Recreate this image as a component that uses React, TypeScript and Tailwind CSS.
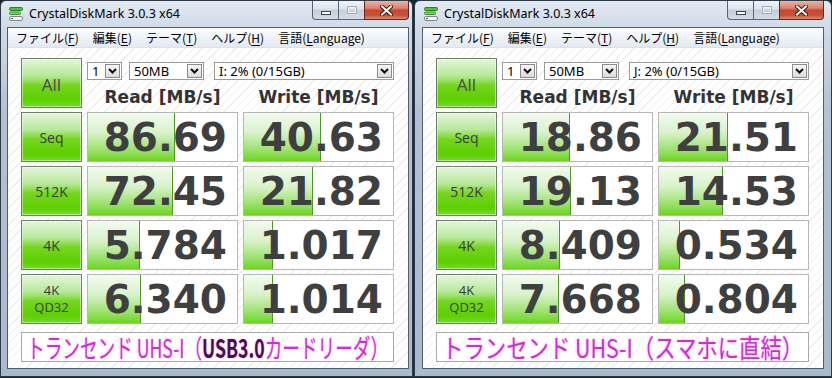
import React, { useLayoutEffect, useRef, useState } from 'react';

type Row = { label: string[]; read: string; write: string };

const leftRows: Row[] = [
  { label: ['Seq'], read: '86.69', write: '40.63' },
  { label: ['512K'], read: '72.45', write: '21.82' },
  { label: ['4K'], read: '5.784', write: '1.017' },
  { label: ['4K', 'QD32'], read: '6.340', write: '1.014' },
];

const rightRows: Row[] = [
  { label: ['Seq'], read: '18.86', write: '21.51' },
  { label: ['512K'], read: '19.13', write: '14.53' },
  { label: ['4K'], read: '8.409', write: '0.534' },
  { label: ['4K', 'QD32'], read: '7.668', write: '0.804' },
];

// CrystalDiskMark meter is log scaled
const meter = (v: string) => {
  const w = 149 * (0.193 + 0.203 * Math.log10(parseFloat(v)));
  return Math.max(0, Math.min(149, Math.round(w)));
};

const menu = [
  ['ファイル(', 'F', ')'],
  ['編集(', 'E', ')'],
  ['テーマ(', 'T', ')'],
  ['ヘルプ(', 'H', ')'],
  ['言語(', 'L', 'anguage)'],
];

function AppIcon() {
  return (
    <svg width="16" height="16" viewBox="0 0 16 16">
      <rect x="1.5" y="1.5" width="13" height="3" rx="1" fill="#4cc23a" stroke="#2f7d25" />
      <rect x="1.5" y="6" width="11" height="2.5" rx="1" fill="#7ad86a" stroke="#3c8f30" />
      <rect x="1.5" y="10.5" width="13" height="4" rx="1.5" fill="#f4f6f8" stroke="#7d8791" />
      <rect x="3" y="12" width="2" height="1.2" fill="#5a646e" />
    </svg>
  );
}

function TitleButtons() {
  return (
    <div className="flex h-[19px] self-start">
      <div className="flex h-full w-[26px] items-end justify-center rounded-bl-[4px] border border-t-0 border-r-0 border-[#55667a] bg-[linear-gradient(to_bottom,#f1f4f8_0%,#dde4ec_45%,#c4cfdb_50%,#d3dce6_100%)] pb-[4px]">
        <div className="h-[4px] w-[10px] border border-[#36424f] bg-white" />
      </div>
      <div className="flex h-full w-[26px] items-center justify-center border-b border-l border-[#55667a] bg-[linear-gradient(to_bottom,#f1f4f8_0%,#dde4ec_45%,#c4cfdb_50%,#d3dce6_100%)]">
        <div className="h-[8px] w-[10px] border border-[#a3adb8] bg-transparent shadow-[inset_0_0_0_1px_#eef2f6]" />
      </div>
      <div className="flex h-full w-[45px] items-center justify-center rounded-br-[4px] border border-t-0 border-[#5a2a24] bg-[linear-gradient(to_bottom,#eab1a4_0%,#d9826f_40%,#c4472f_52%,#c8523b_80%,#dc8a6c_100%)]">
        <svg width="13" height="11" viewBox="0 0 13 11">
          <path d="M2 1.5 L11 9.5 M11 1.5 L2 9.5" stroke="#3d1810" strokeWidth="4" strokeLinecap="square" />
          <path d="M2 1.5 L11 9.5 M11 1.5 L2 9.5" stroke="#ffffff" strokeWidth="2" strokeLinecap="square" />
        </svg>
      </div>
    </div>
  );
}

function Chevron() {
  return (
    <svg width="9" height="6" viewBox="0 0 9 6">
      <path d="M1 1 L4.5 4.5 L8 1" stroke="#111" strokeWidth="2" fill="none" />
    </svg>
  );
}

function Combo({ width, text }: { width: string; text: string }) {
  return (
    <div className={`flex h-[18px] items-center border border-[#9a9a9a] bg-white ${width}`}>
      <span className="flex-1 pl-[4px] font-['Noto_Sans'] text-[13px] leading-none text-black">{text}</span>
      <div className="mr-[1px] flex h-[14px] w-[15px] items-center justify-center border border-[#8c8c8c] bg-[linear-gradient(to_bottom,#f6f6f6,#dcdcdc)]">
        <Chevron />
      </div>
    </div>
  );
}

function GreenButton({ children, className }: { children: React.ReactNode; className: string }) {
  return (
    <div
      className={`flex flex-col items-center justify-center border border-[#6c7e6c] bg-[linear-gradient(to_bottom,#e4f6da_0%,#b6e89a_35%,#74d61f_55%,#5ccf00_85%,#74dc26_100%)] text-[#3a3a3a] shadow-[inset_0_0_0_1px_rgba(255,255,255,0.45)] ${className}`}
    >
      {children}
    </div>
  );
}

function Cell({ value }: { value: string }) {
  return (
    <div className="relative h-[50px] w-[151px] border border-[#b7b7b7] bg-white">
      <div
        className="absolute inset-y-0 left-0 border-r border-[#4c9a26] bg-[linear-gradient(to_bottom,#f3fbef_0%,#d9f2cc_40%,#9fe273_75%,#6cd520_100%)]"
        style={{ width: meter(value) }}
      />
      <div className="relative flex h-full items-center justify-end pr-[10px] font-['DejaVu_Sans'] text-[39px] font-bold leading-none text-[#3f3f3f]">
        {value}
      </div>
    </div>
  );
}

function Comment({ children }: { children: React.ReactNode }) {
  const boxRef = useRef<HTMLDivElement>(null);
  const textRef = useRef<HTMLSpanElement>(null);
  const [fit, setFit] = useState({ scale: 1, trim: 0 });

  useLayoutEffect(() => {
    const measure = () => {
      const box = boxRef.current;
      const text = textRef.current;
      if (!box || !text) return;
      const natural = text.offsetWidth;
      const target = box.clientWidth - 10;
      setFit({ scale: target / natural, trim: target - natural });
    };
    measure();
    document.fonts?.ready.then(measure);
  }, []);

  return (
    <div ref={boxRef} className="mt-[8px] flex h-[30px] items-center border border-[#a9a9a9] bg-white pl-[5px]">
      <span
        ref={textRef}
        className="inline-block origin-left whitespace-nowrap font-['Noto_Sans_CJK_JP',sans-serif] text-[26px] leading-none text-[#cf2ecf] [text-shadow:0_0_3px_#f3b0f3]"
        style={{ transform: `scaleX(${fit.scale})`, marginRight: fit.trim }}
      >
        {children}
      </span>
    </div>
  );
}

function Window({
  frame,
  drive,
  rows,
  comment,
}: {
  frame: string;
  drive: string;
  rows: Row[];
  comment: React.ReactNode;
}) {
  return (
    <div
      className={`flex h-[377px] flex-col rounded-t-[6px] border border-[#2f3b49] bg-[linear-gradient(to_bottom,#e2eaf3_0px,#d0dbe8_26px,#b2c2d4_110px,#a9bace_100%)] ${frame}`}
    >
      {/* title bar */}
      <div className="flex h-[26px] items-center">
        <div className="ml-[1px] flex items-center">
          <AppIcon />
        </div>
        <span className="ml-[5px] flex-1 font-['Noto_Sans'] text-[12.5px] text-black">CrystalDiskMark 3.0.3 x64</span>
        <TitleButtons />
      </div>

      {/* client */}
      <div className="flex h-[342px] flex-col border border-[#4f5d6d] bg-white">
        <div className="flex h-[20px] items-center border-b border-[#dbe1ea] bg-[linear-gradient(to_bottom,#fcfdfe,#e3e9f2)] pl-[1px] font-['Noto_Sans_CJK_JP',sans-serif] text-[12px] text-black">
          {menu.map(([a, k, b]) => (
            <span key={a} className="px-[7px] leading-none">
              {a}
              <span className="underline underline-offset-2">{k}</span>
              {b}
            </span>
          ))}
        </div>

        <div className="flex flex-1 flex-col bg-[repeating-linear-gradient(135deg,#ffffff_0px,#ffffff_5px,#eeeeee_5px,#eeeeee_6px)] pl-[13px] pr-[14px] pt-[10px]">
          <div className="flex h-[50px] gap-[5px]">
            <GreenButton className="h-[50px] w-[61px]">
              <span className="mt-[2px] font-['Open_Sans'] text-[17px] leading-none text-[#4a4a4a]">All</span>
            </GreenButton>
            <div className="flex flex-col">
              <div className="mt-[4px] flex">
                <Combo width="w-[35px]" text="1" />
                <Combo width="ml-[7px] w-[75px]" text="50MB" />
                <Combo width="ml-[10px] w-[180px]" text={drive} />
              </div>
              <div className="flex gap-[5px] pt-[9px] font-['DejaVu_Sans'] text-[17px] font-bold leading-none text-[#333333]">
                <span className="w-[151px] text-center">Read [MB/s]</span>
                <span className="w-[151px] text-center">Write [MB/s]</span>
              </div>
            </div>
          </div>

          {rows.map((r) => (
            <div key={r.label.join()} className="mt-[4px] flex gap-[5px]">
              <GreenButton className="h-[50px] w-[61px]">
                {r.label.map((l) => (
                  <span
                    key={l}
                    className={`font-['Open_Sans'] leading-[17px] ${r.label.length > 1 ? 'text-[13px]' : 'text-[14px]'}`}
                  >
                    {l}
                  </span>
                ))}
              </GreenButton>
              <Cell value={r.read} />
              <Cell value={r.write} />
            </div>
          ))}

          <Comment>{comment}</Comment>
        </div>
      </div>
    </div>
  );
}

export default function App() {
  return (
    <div className="flex h-[378px] w-[832px] gap-[1px] overflow-hidden bg-[#1c2631]">
      <Window
        frame="w-[413px] pl-[6px] pr-[3px]"
        drive="I: 2% (0/15GB)"
        rows={leftRows}
        comment={
          <>
            トランセンド UHS-I（<span className="font-bold text-[#4b0c4b]">USB3.0</span>カードリーダ）
          </>
        }
      />
      <Window
        frame="w-[418px] pl-[7px] pr-[7px]"
        drive="J: 2% (0/15GB)"
        rows={rightRows}
        comment={<>トランセンド UHS-I（スマホに直結）</>}
      />
    </div>
  );
}
